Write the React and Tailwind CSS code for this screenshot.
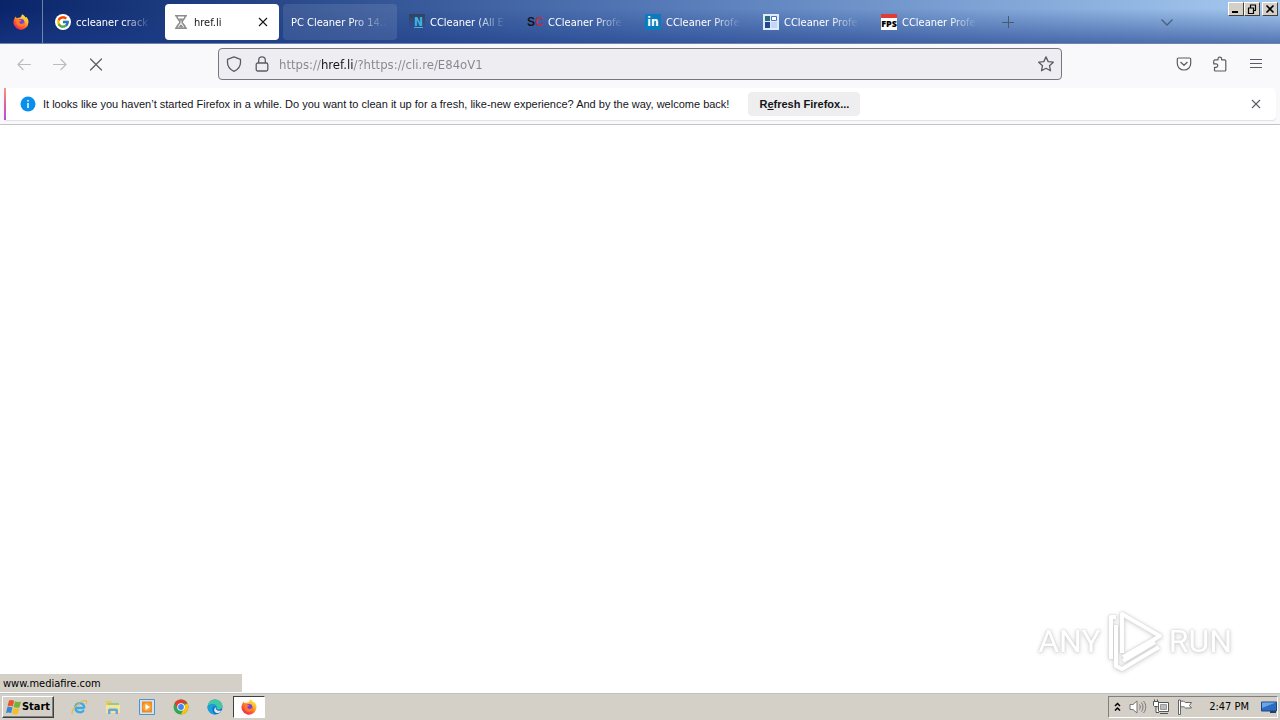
import React, { useState } from 'react';
import { FcGoogle } from 'react-icons/fc';

const FirefoxIcon = ({ className = 'size-4' }) => (
  <svg viewBox="0 0 16 16" className={className} aria-hidden="true">
    <defs>
      <linearGradient id="fx-body" x1="0.85" y1="0.05" x2="0.2" y2="1">
        <stop offset="0" stopColor="#fff04a" />
        <stop offset="0.35" stopColor="#ffb128" />
        <stop offset="0.65" stopColor="#ff5a30" />
        <stop offset="1" stopColor="#e8215f" />
      </linearGradient>
    </defs>
    <path
      d="M9 .2c2 1 3 2 3.500 3.300l1-.5c1.300 1.500 2 3.300 2 5.300A7.500 7.500 0 1 1 1.300 4.800L2.300 2.500 3.600 4 5.600 3.800C7.500 3.800 8.500 2.500 9 .2z"
      fill="url(#fx-body)"
    />
    <circle cx="8" cy="8.300" r="3.400" fill="#7a3fe0" />
    <path d="M3.800 5.500c2-.6 3 .4 4.500.8-.3 1-1.500 1-2 1.700.2 2.500 3.500 2.500 5 .3C12 11.500 9.500 13 7.500 12.700 4 12.300 2.500 8.500 3.800 5.500z" fill="#ff7b26" />
  </svg>
);

const HourglassIcon = () => (
  <svg viewBox="0 0 16 16" className="size-4 shrink-0" fill="none" stroke="#8c8c8c" strokeWidth="1.600" aria-hidden="true">
    <path d="M2 1.800h12M2 14.200h12M3.800 2c0 3.500 3.200 4 3.200 6s-3.200 2.500-3.200 6M12.200 2c0 3.500-3.200 4-3.200 6s3.200 2.500 3.200 6" />
    <path d="M5.500 4.500h5L8 7.200zM5 13.500l3-3.300 3 3.300z" fill="#8c8c8c" stroke="none" />
  </svg>
);

const BlocksIcon = () => (
  <svg viewBox="0 0 16 16" className="size-4 shrink-0" aria-hidden="true">
    <path fill="#dfeafa" d="M0 0h16v16H0z" />
    <path fill="#2c6b78" d="M2 2h5v5H2z" />
    <path fill="#fff" stroke="#4a72c4" d="M8.500 2.500h5v4h-5z" />
    <path fill="#22468f" d="M2 8h5v6H2z" />
    <path fill="#c4d6f4" d="M8 8h6v6H8z" />
  </svg>
);

const CloseIcon = ({ className = 'size-4' }) => (
  <svg viewBox="0 0 16 16" className={className} fill="none" stroke="currentColor" strokeWidth="1.100" aria-hidden="true">
    <path d="M4 4l8 8M12 4l-8 8" />
  </svg>
);

const TABS = [
  {
    title: 'ccleaner crack -',
    icon: (
      <span className="flex size-4 shrink-0 items-center justify-center rounded-full bg-white">
        <FcGoogle className="size-3.5" />
      </span>
    ),
  },
  { title: 'href.li', icon: <HourglassIcon />, active: true },
  { title: 'PC Cleaner Pro 14.2', hover: true },
  {
    title: 'CCleaner (All E',
    icon: (
      <span className="flex size-4 shrink-0 items-center justify-end bg-linear-to-b from-[#2d4560] to-transparent pr-0.5 text-[12px] font-bold text-[#3fb4e6] underline">
        N
      </span>
    ),
  },
  {
    title: 'CCleaner Profe',
    icon: (
      <svg viewBox="0 0 16 16" className="size-4 shrink-0 font-['Liberation_Sans',sans-serif] text-[12px] font-bold">
        <text x="0" y="12" fill="#15151f">
          S<tspan fill="#b52e48">C</tspan>
        </text>
      </svg>
    ),
  },
  {
    title: 'CCleaner Profe',
    icon: (
      <span className="flex size-4 shrink-0 items-center justify-center bg-[#0a7bbd] text-[12px] font-bold text-white">
        in
      </span>
    ),
  },
  { title: 'CCleaner Profe', icon: <BlocksIcon /> },
  {
    title: 'CCleaner Profe',
    icon: (
      <span className="flex size-4 shrink-0 items-center justify-center border-t-4 border-[#e23b35] bg-white font-['Open_Sans',sans-serif] text-[9px] font-black text-black">
        FPS
      </span>
    ),
  },
];

const Tab = ({ tab }) => {
  let look = 'text-white';
  if (tab.active) look = 'bg-white text-[#15141a]';
  else if (tab.hover) look = 'bg-white/10 text-white';

  return (
    <div className="w-[118px] px-0.5 py-1">
      <div className={`flex h-9 items-center rounded-[4px] px-2 ${look}`}>
        <button type="button" className="flex min-w-0 flex-1 items-center gap-[5px] text-left">
          {tab.icon}
          <span className="min-w-0 flex-1 overflow-hidden pt-0.5 whitespace-nowrap [mask-image:linear-gradient(to_right,black_60%,transparent_98%)]">
            {tab.title}
          </span>
        </button>
        {tab.active && (
          <button type="button" aria-label="Close tab">
            <CloseIcon />
          </button>
        )}
      </div>
    </div>
  );
};

const CaptionButton = ({ label, children }) => (
  <button
    type="button"
    aria-label={label}
    className="flex h-3.5 w-4 items-center justify-center border border-t-white border-r-[#404040] border-b-[#404040] border-l-white bg-[#d4d0c8]"
  >
    <svg viewBox="0 0 12 10" className="h-2.5 w-3" fill="none" stroke="#000" aria-hidden="true">
      {children}
    </svg>
  </button>
);

const TabStrip = () => (
  <div className="bg-linear-to-r from-[#0a246a] via-[#5377b5] to-[#a6caf0]">
    <div className="flex h-11 border-b border-[#7484a8] bg-linear-to-b from-transparent from-20% to-[#1c3c8a]/60">
      <button type="button" aria-label="Firefox View" className="flex w-[43px] items-center justify-center border-r border-white/40">
        <FirefoxIcon />
      </button>
      <div className="ml-0.5 flex">
        {TABS.map((tab, index) => (
          <Tab key={index} tab={tab} />
        ))}
      </div>
      <button type="button" aria-label="New tab" className="flex w-[38px] items-center justify-center text-[#49596f]">
        <svg viewBox="0 0 12 12" className="size-3" fill="none" stroke="currentColor">
          <path d="M6.500 0v12M0 6.500h12" />
        </svg>
      </button>
      <button type="button" aria-label="List all tabs" className="mr-[55px] ml-auto text-[#49617f]">
        <svg viewBox="0 0 12 12" className="size-3" fill="none" stroke="currentColor" strokeWidth="1.300">
          <path d="M.5 3.500L6 9l5.500-5.500" />
        </svg>
      </button>
      <div className="flex pt-0.5 pr-0.5">
        <CaptionButton label="Minimize">
          <path d="M2 8h6" strokeWidth="2" />
        </CaptionButton>
        <CaptionButton label="Restore">
          <path d="M4 1h6M4.500 1v3M9.500 1v5M8 6.500h2M2 4h6M2.500 4v5.500h5V4" strokeWidth="1.200" />
        </CaptionButton>
        <div className="w-0.5" />
        <CaptionButton label="Close">
          <path d="M2.500 1.500l7 7M9.500 1.500l-7 7" strokeWidth="1.600" />
        </CaptionButton>
      </div>
    </div>
  </div>
);

const ToolButton = ({ label, muted, children }) => (
  <button
    type="button"
    aria-label={label}
    className={`flex h-8 w-9 items-center justify-center ${muted ? 'text-[#bcbcc0]' : 'text-[#5b5b66]'}`}
  >
    <svg viewBox="0 0 16 16" className="size-4" fill="none" stroke="currentColor" strokeWidth="1.200" strokeLinejoin="round" strokeLinecap="round">
      {children}
    </svg>
  </button>
);

const NavBar = () => {
  const [url, setUrl] = useState('https://href.li/?https://cli.re/E84oV1');

  return (
    <div className="flex h-11 items-center bg-[#f9f9fb] px-1.5 pt-1 pb-2">
      <ToolButton label="Back" muted>
        <path d="M14.500 8.500H2M7 3.500l-5 5 5 5" />
      </ToolButton>
      <ToolButton label="Forward" muted>
        <path d="M1.500 8.500H14M9 3.500l5 5-5 5" />
      </ToolButton>
      <ToolButton label="Stop">
        <path d="M2.500 3l11 11M13.500 3l-11 11" />
      </ToolButton>
      <div className="mx-[104px] flex h-8 flex-1 items-center rounded-[4px] border border-[#77777e] bg-[#eeeef2] px-[7px] text-[#5b5b66]">
        <svg viewBox="0 0 16 16" className="size-4" fill="none" stroke="currentColor" strokeWidth="1.300" strokeLinejoin="round">
          <path d="M8 .8l6.500 2.500v3.200c0 4-2.500 7-6.500 8.800-4-1.800-6.500-4.800-6.500-8.800V3.300z" />
        </svg>
        <svg viewBox="0 0 16 16" className="ml-3 size-4" fill="none" stroke="currentColor" strokeWidth="1.300">
          <rect x="2.200" y="7" width="11.600" height="8" rx="1.500" />
          <path d="M4.700 7V4.200a3.300 3.300 0 0 1 6.600 0V7" />
        </svg>
        {/* the host name is painted darker than the rest of the address */}
        <input
          type="text"
          aria-label="Address"
          spellCheck={false}
          value={url}
          onChange={e => setUrl(e.target.value)}
          className="ml-[9px] min-w-0 flex-1 bg-[linear-gradient(to_right,#85858c_42px,#15141a_42px,#15141a_74px,#85858c_74px)] bg-clip-text pt-0.5 text-[13px] text-transparent outline-none"
        />
        <button type="button" aria-label="Bookmark this page">
          <svg viewBox="0 0 16 16" className="size-4" fill="none" stroke="currentColor" strokeWidth="1.300" strokeLinejoin="round">
            <path d="M8 .9l2.200 4.700 5.100.6-3.800 3.500 1 5.100L8 12.300l-4.500 2.500 1-5.100L.7 6.200l5.100-.6z" />
          </svg>
        </button>
      </div>
      <ToolButton label="Save to Pocket">
        <path d="M2.500 2h11c.7 0 1.200.5 1.200 1.200V7.500c0 4-3 6.500-6.700 6.500s-6.700-2.500-6.700-6.500V3.200C1.300 2.500 1.800 2 2.500 2z" />
        <path d="M4.800 6.300L8 9.300l3.200-3" />
      </ToolButton>
      <ToolButton label="Extensions">
        <path d="M6 3.800V3a1.800 1.800 0 0 1 3.600 0v.8h3.200c.6 0 1 .4 1 1V14c0 .6-.4 1-1 1H3.500c-.6 0-1-.4-1-1v-2.700h1.600a1.700 1.700 0 0 0 0-3.400H1.700V5.500c0-1 .5-1.700 1.300-1.700z" />
      </ToolButton>
      <ToolButton label="Menu">
        <path d="M2 3.500h12M2 7.500h12M2 11.500h12" strokeLinecap="butt" />
      </ToolButton>
    </div>
  );
};

const Notification = () => (
  <div className="border-b border-[#c4c4c8] bg-[#f9f9fb] px-1 pb-1 font-['Liberation_Sans',sans-serif]">
    <div className="flex h-8 items-center rounded-[4px] bg-white pr-3 shadow-[0_1px_1px_#e0e0e4]">
      <div className="h-8 w-0.5 bg-linear-to-b from-[#f59a70] via-[#e0609c] to-[#a850d8]" />
      <svg viewBox="0 0 16 16" className="ml-3.5 size-4" aria-hidden="true">
        <circle cx="8" cy="8" r="7.500" fill="#0a90ec" />
        <path d="M8 7v5M8 4v1.500" stroke="#fff" strokeWidth="1.500" />
      </svg>
      <p className="ml-[7px] whitespace-nowrap">
        It looks like you haven’t started Firefox in a while. Do you want to clean it up for a fresh, like-new
        experience? And by the way, welcome back!
      </p>
      <button type="button" className="ml-[19px] h-6 w-28 rounded-[4px] bg-[#eeeeef] font-bold whitespace-nowrap">
        R<span className="underline">e</span>fresh Firefox...
      </button>
      <button type="button" aria-label="Close message" className="ml-auto text-[#5b5b66]">
        <CloseIcon />
      </button>
    </div>
  </div>
);

const Watermark = () => (
  <div
    aria-label="ANY RUN"
    className="mr-12 mb-5 flex items-center gap-1 self-end font-['Roboto',sans-serif] text-[32px] leading-[64px] text-white [filter:drop-shadow(0_0_1px_#cccccc)_drop-shadow(0_1px_2px_#d8d8d8)]"
  >
    <span>ANY</span>
    <svg viewBox="0 0 60 64" className="h-16 w-[60px]" fill="none" stroke="#fff" strokeWidth="4" strokeLinejoin="round">
      <path d="M17 44V5l38 22-37 21" />
      <path d="M11 8H6v42M11 16v41l6 3 37-22M18 52l32-19" />
    </svg>
    <span>RUN</span>
  </div>
);

const QUICK_LAUNCH = [
  {
    label: 'Internet Explorer',
    art: (
      <>
        <path d="M13.500 9H4.500C4.500 14 11 14.500 12.800 11.300M4.200 9C4 2.500 13.500 2.500 13.300 9" fill="none" stroke="#3aabe6" strokeWidth="2.300" />
        <path d="M1.500 15C-1 12 8 2 14.500 1.500c2 0 1 2.500.5 3.200" fill="none" stroke="#e5b93c" strokeWidth="1.200" />
      </>
    ),
  },
  {
    label: 'Explorer',
    art: (
      <>
        <path d="M1 2h5l1 2h7v9H1z" fill="#ecc75c" />
        <path d="M3 4h11v4H3z" fill="#8fcf87" />
        <path d="M1 6h14v8H1z" fill="#f7e39a" />
        <path d="M3 15v-4c0-1 1-1.500 2-1.500h6c1 0 2 .5 2 1.500v4h-2.500v-3h-5v3z" fill="#65a9dc" />
      </>
    ),
  },
  {
    label: 'Media Player',
    art: (
      <>
        <path d="M.5.5h15v15H.5z" fill="#cfe5f7" stroke="#4e93cc" />
        <path d="M3 2.500h10v11H3z" fill="#f08a1c" />
        <circle cx="8" cy="8" r="4.300" fill="#f7a43c" />
        <path d="M6.500 5v6l4.500-3z" fill="#fff" />
      </>
    ),
  },
  {
    label: 'Chrome',
    art: (
      <>
        <circle cx="8" cy="8" r="7.500" fill="#33a653" />
        <path d="M8 8l6.500-3.700A7.500 7.500 0 0 1 8 15.500L11 9z" fill="#fbc116" />
        <path d="M8 4.300h6.500a7.500 7.500 0 0 0-13 0L5 10z" fill="#e33b2e" />
        <circle cx="8" cy="8" r="3.800" fill="#fff" />
        <circle cx="8" cy="8" r="2.900" fill="#4285f4" />
      </>
    ),
  },
  {
    label: 'Edge',
    art: (
      <>
        <circle cx="8" cy="8" r="7.500" fill="#1670c4" />
        <path d="M.5 7.500C1 3 4.500.5 8 .5c4.500 0 7.500 3 7.500 6.500 0 2.500-2 3.800-4.500 3.500C9 10 10 9 9.500 7.500 8.500 4.500 3 4.500.5 7.500z" fill="#42c8a5" />
        <path d="M.5 8c2.500-4 8-3.500 8.800-.5-3-.8-4.500 1.500-3.800 4 .5 1.800 1.500 3 3 4C4 15.500.5 12.500.5 8z" fill="#1aa0dc" />
        <path d="M9 8c-1 2 1 4.500 5.500 3.500-1.500 2.500-4 3.200-6 2C6.500 12 7 9 9 8z" fill="#d9eaf4" />
      </>
    ),
  },
];

const Taskbar = () => (
  <div className="flex h-[27px] items-center border-t border-[#b8c4c8] bg-[#d4d0c8] px-0.5 text-black">
    <button
      type="button"
      className="flex h-[22px] w-[52px] items-center justify-center border border-t-white border-r-[#404040] border-b-[#404040] border-l-white text-[11px] font-bold shadow-[inset_-1px_-1px_#808080]"
    >
      <svg viewBox="0 0 16 16" className="size-4" aria-hidden="true">
        <path d="M3 1.500c2-1 3.500-.7 5.200.2L6.800 7.500c-1.500-1-3-1-5.300-.2z" fill="#e7552b" />
        <path d="M9 2.200c1.800 1 3.500 1 6 .2l-1.500 5.800c-2 .8-4 .6-5.900-.3z" fill="#72b338" />
        <path d="M1.300 8.300c2-.8 3.500-.6 5.200.3l-1.400 5.700c-1.500-1-3-1-5.100-.2z" fill="#3c85cf" />
        <path d="M7.400 9c1.800 1 3.500 1 5.900.3l-1.500 5.700c-2 .8-4 .5-5.800-.4z" fill="#f4be29" />
      </svg>
      Start
    </button>
    <div className="ml-2 flex">
      {QUICK_LAUNCH.map(item => (
        <button key={item.label} type="button" aria-label={item.label} className="flex w-[34px] justify-center">
          <svg viewBox="0 0 16 16" className="size-4" aria-hidden="true">
            {item.art}
          </svg>
        </button>
      ))}
    </div>
    <button
      type="button"
      aria-label="Firefox"
      className="ml-px flex h-[22px] w-8 items-center justify-center border border-t-[#404040] border-r-white border-b-white border-l-[#404040] bg-white"
    >
      <FirefoxIcon />
    </button>
    <div className="ml-auto flex h-[22px] items-center border border-t-[#808080] border-r-white border-b-white border-l-[#808080] pl-1">
      <button type="button" aria-label="Show hidden icons" className="w-2.5">
        <svg viewBox="0 0 10 12" className="h-3 w-2.5" fill="none" stroke="#000" strokeWidth="1.500">
          <path d="M2 5l2.500-2.500L7 5M2 9.500L4.500 7 7 9.500" />
        </svg>
      </button>
      <svg viewBox="0 0 18 16" className="ml-1.5 h-4 w-[18px]" fill="#fff" stroke="#777" aria-hidden="true">
        <path d="M1 5.500h3L8 2v12l-4-3.500H1z" />
        <path d="M10.500 5.500c1 1.500 1 3.500 0 5M12.500 3.500c2 2.500 2 6.500 0 9M14.500 2c3 3.500 3 8.500 0 12" fill="none" />
      </svg>
      <svg viewBox="0 0 18 16" className="ml-1.5 h-4 w-[18px]" stroke="#555" aria-hidden="true">
        <path d="M5.500 3.500h10v9h-10z" fill="#fff" />
        <path d="M7.500 5.500h6v5h-6z" fill="#bbb" stroke="#999" />
        <path d="M7 14.500h8M.5 2.500h5v4l-1 1h-3l-1-1zM1.500.5v2M4.500.5v2M3 7.500v6h3" fill="#fff" />
      </svg>
      <svg viewBox="0 0 16 16" className="ml-1.5 size-4" fill="#fff" stroke="#666" aria-hidden="true">
        <path d="M1.500 1v14.500h2V1zM3.500 2.500c2-1 4 0 5 1h6l-2 3 2 2.500h-6c-1-1.500-3-1.500-5-1z" />
      </svg>
      <time className="ml-4 whitespace-nowrap">2:47 PM</time>
      <svg viewBox="0 0 16 16" className="ml-3 size-4" aria-hidden="true">
        <path d="M.5 3h15v9H.5z" fill="#2d6cc0" stroke="#174785" />
        <path d="M1 3.500h14L1 9z" fill="#6ca5e4" />
        <path d="M9 12h6v2H9z" fill="#24405f" />
      </svg>
    </div>
  </div>
);

const App = () => (
  <div className="flex min-h-screen flex-col bg-white font-['DejaVu_Sans_Condensed','DejaVu_Sans',sans-serif] text-[11px] text-[#15141a]">
    <TabStrip />
    <NavBar />
    <Notification />
    <main className="flex flex-1 flex-col justify-end">
      <Watermark />
    </main>
    <div className="-mt-[19px] mb-px h-[18px] w-[242px] bg-[#d4d0c8] pl-[3px] leading-[20px] text-black">www.mediafire.com</div>
    <Taskbar />
  </div>
);

export default App;
